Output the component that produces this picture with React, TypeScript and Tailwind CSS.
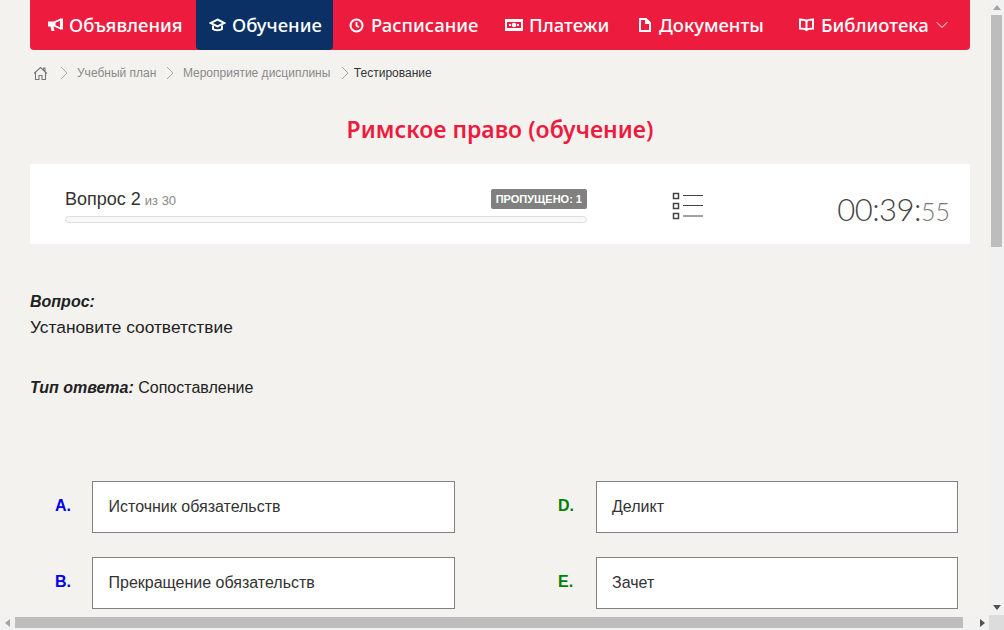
import { ChevronDown } from "lucide-react";
import type { ReactNode } from "react";

const MegaphoneIcon = () => (
  <svg width="15" height="15" viewBox="0 0 15 15" fill="white">
    <path d="M0 3.500h6L12.500 .5H15v11h-2.500L6 8.500H5.500l1 4.500H3.500l-1-4.500H0z" />
    <path d="M7.500 4.800l4.500-2v6.400l-4.500-2z" fill="#ed1c3f" />
  </svg>
);

const CapIcon = () => (
  <svg width="17" height="14" viewBox="0 0 17 14" fill="none" stroke="white" strokeWidth="2">
    <path d="M8.500 1.500L15.500 5l-7 3.500L1.500 5z" />
    <path d="M4 7.500V11c1.500 1.500 7.500 1.500 9 0V7.500" />
  </svg>
);

const ClockIcon = () => (
  <svg width="15" height="15" viewBox="0 0 15 15" fill="none" stroke="white" strokeWidth="2">
    <circle cx="7.500" cy="7.500" r="6" />
    <path d="M7.500 4v3.700l2.500 1.500" strokeWidth="1.800" />
  </svg>
);

const MoneyIcon = () => (
  <svg width="18" height="12" viewBox="0 0 18 12" fill="white">
    <path fillRule="evenodd" d="M0 0h18v12H0zM2 3v6h14V3z" />
    <circle cx="9" cy="6" r="2.300" />
    <rect x="4" y="5" width="2" height="2" />
    <rect x="12" y="5" width="2" height="2" />
  </svg>
);

const DocIcon = () => (
  <svg width="12" height="14" viewBox="0 0 12 14" fill="white">
    <path fillRule="evenodd" d="M0 0h7.500L12 4.500V14H0zM2 2v10h8V6H6V2z" />
  </svg>
);

const BookIcon = () => (
  <svg width="15" height="14" viewBox="0 0 15 14" fill="none" stroke="white" strokeWidth="2">
    <path d="M7.500 3C6 1.500 3 1.500 1 1.500v9c2 0 5 0 6.500 1.500 1.500-1.500 4.500-1.500 6.500-1.500v-9c-2 0-5 0-6.500 1.500z" />
    <path d="M7.500 3v9" />
  </svg>
);

const HomeIcon = () => (
  <svg className="ml-[3px]" width="15" height="15" viewBox="0 0 15 15" fill="none" stroke="#777777" strokeWidth="1.100">
    <path d="M1 7.500L7.500 1.500 14 7.500M2.500 6.500v7h3.500v-4h3v4h3.500v-7M10.500 4V2h1.500v3.500" />
  </svg>
);

const CrumbArrow = ({ className }: { className: string }) => (
  <svg className={className} width="8" height="14" viewBox="0 0 8 14" fill="none" stroke="#aaaaaa" strokeWidth="1">
    <path d="M1 1l6 6-6 6" />
  </svg>
);

function NavItem({ icon, label, className }: { icon: ReactNode; label: string; className: string }) {
  return (
    <div className={`flex h-[50px] items-center ${className}`}>
      {icon}
      <span className="text-[18.5px] font-medium leading-none text-white">{label}</span>
    </div>
  );
}

function MatchRow({ letter, color, text, boxClass }: { letter: string; color: string; text: string; boxClass: string }) {
  return (
    <div className="flex items-center">
      <span className={`mb-[2px] w-[37px] text-base font-bold ${color}`}>{letter}</span>
      <div className={`flex h-[52px] items-center border border-[#808080] bg-white text-base text-[#333333] ${boxClass}`}>
        {text}
      </div>
    </div>
  );
}

export default function App() {
  return (
    <div className="flex h-[630px] w-[1004px] flex-col overflow-hidden bg-[#f3f2ef] font-['Liberation_Sans',sans-serif]">
      <div className="flex min-h-0 flex-1">
        <div className="w-[989px] overflow-hidden px-[30px] pr-[19px]">
          {/* Top nav */}
          <div className="flex h-[50px] w-[940px] items-center rounded-b-[4px] bg-[#ed1c3f] font-['Noto_Sans',sans-serif]">
            <NavItem icon={<span className="mr-[6px]"><MegaphoneIcon /></span>} label="Объявления" className="w-[166px] pl-[18px]" />
            <NavItem icon={<span className="mr-[6px]"><CapIcon /></span>} label="Обучение" className="w-[137px] rounded-b-[4px] bg-[#0a3065] pl-[13px]" />
            <NavItem icon={<span className="mr-[7px]"><ClockIcon /></span>} label="Расписание" className="w-[156px] pl-[16px]" />
            <NavItem icon={<span className="mr-[6px]"><MoneyIcon /></span>} label="Платежи" className="w-[134px] pl-[16px]" />
            <NavItem icon={<span className="mr-[8px]"><DocIcon /></span>} label="Документы" className="w-[160px] pl-[16px]" />
            <NavItem icon={<span className="mr-[7px]"><BookIcon /></span>} label="Библиотека" className="ml-[16px]" />
            <ChevronDown className="ml-[3px] h-[20px] w-[20px] text-white" strokeWidth={1.200} />
          </div>

          {/* Breadcrumbs */}
          <div className="mt-[14px] flex h-[18px] items-center text-xs">
            <HomeIcon />
            <CrumbArrow className="ml-[12px] mr-[9px]" />
            <span className="text-[#8a8a8a]">Учебный план</span>
            <CrumbArrow className="ml-[10px] mr-[8.500px]" />
            <span className="text-[#8a8a8a]">Мероприятие дисциплины</span>
            <CrumbArrow className="ml-[10.500px] mr-[5px]" />
            <span className="text-[#333333]">Тестирование</span>
          </div>

          <h1 className="mt-[32px] h-[30px] w-[940px] text-center font-['Noto_Sans',sans-serif] text-[23px] font-semibold leading-[30px] text-[#ed1c3f]">
            Римское право (обучение)
          </h1>

          {/* Progress card */}
          <div className="mt-[20px] flex h-[80px] w-[940px] items-center bg-white pl-[35px] pr-[20px]">
            <div className="mt-[4px] w-[522px]">
              <div className="flex h-[20px] items-center justify-between">
                <div className="leading-[20px] text-[#333333]">
                  <span className="text-lg">Вопрос 2</span>
                  <span className="ml-[4px] text-[13px] text-[#888888]">из 30</span>
                </div>
                <span className="rounded-[2px] bg-[#808080] px-[5px] py-[3px] text-[11px] font-bold leading-[14px] text-white">ПРОПУЩЕНО: 1</span>
              </div>
              <div className="mt-[7px] h-[7px] rounded-full border border-[#dddddd] bg-[#f9f9f9]" />
            </div>
            <svg className="ml-[85px] mt-[4px]" width="31" height="28" viewBox="0 0 31 28" fill="none" stroke="#444444" strokeWidth="1">
              <rect x="1.500" y="1.500" width="5" height="5" strokeWidth="1.500" />
              <rect x="1.500" y="11.500" width="5" height="5" strokeWidth="1.500" />
              <rect x="1.500" y="21.500" width="5" height="5" strokeWidth="1.500" />
              <path d="M11 3.500h20M11 13.500h20M11 24h20" />
            </svg>
            <div className="ml-auto mt-[10px] font-['Lato',sans-serif] text-[31px] font-light leading-none tracking-[-0.5px] text-[#444444]">
              00:39:<span className="text-[25px] tracking-normal text-[#777777]">55</span>
            </div>
          </div>

          {/* Question */}
          <div className="mt-[48px] text-[#222222]">
            <div className="text-base font-bold italic leading-[20px]">Вопрос:</div>
            <div className="mt-[5px] text-[17.330px] leading-[20px]">Установите соответствие</div>
            <div className="mt-[41px] text-base leading-[20px]">
              <b className="italic">Тип ответа:</b> Сопоставление
            </div>
          </div>

          {/* Matching columns */}
          <div className="mt-[83px] ml-[25px] grid w-[903px] grid-cols-[504px_1fr] gap-y-[24px]">
            <MatchRow letter="A." color="text-[#0000ee]" text="Источник обязательств" boxClass="w-[363px] pl-[15.500px]" />
            <MatchRow letter="D." color="ml-[-1px] text-[#008000]" text="Деликт" boxClass="ml-[1px] w-[362px] pl-[15px]" />
            <MatchRow letter="B." color="text-[#0000ee]" text="Прекращение обязательств" boxClass="w-[363px] pl-[15.500px]" />
            <MatchRow letter="E." color="ml-[-1px] text-[#008000]" text="Зачет" boxClass="ml-[1px] w-[362px] pl-[15px]" />
          </div>
        </div>

        {/* Vertical scrollbar */}
        <div className="flex w-[15px] flex-col items-center bg-[#f1f1f1]">
          <div className="mt-[5px] h-0 w-0 border-x-[4px] border-b-[5px] border-x-transparent border-b-[#a3a3a3]" />
          <div className="mt-[5px] h-[232px] w-[11px] bg-[#bdbdbd]" />
          <div className="mt-auto mb-[5px] h-0 w-0 border-x-[4px] border-t-[5px] border-x-transparent border-t-[#505050]" />
        </div>
      </div>

      {/* Horizontal scrollbar */}
      <div className="flex h-[15px] shrink-0 items-center bg-[#f1f1f1]">
        <div className="ml-[5px] h-0 w-0 border-y-[4px] border-r-[5px] border-y-transparent border-r-[#a3a3a3]" />
        <div className="ml-[5px] h-[11px] w-[948px] bg-[#bdbdbd]" />
        <div className="ml-[17px] h-0 w-0 border-y-[4px] border-l-[5px] border-y-transparent border-l-[#505050]" />
        <div className="ml-auto h-full w-[15px] bg-[#dcdcdc]" />
      </div>
    </div>
  );
}
